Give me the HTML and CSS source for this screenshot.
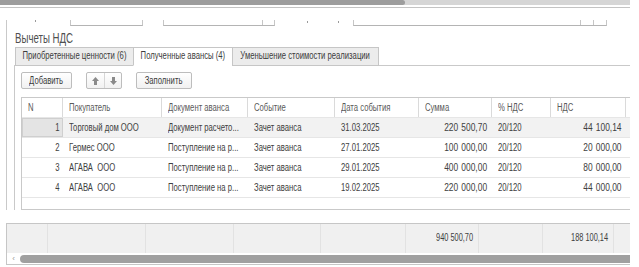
FILE: index.html
```html
<!DOCTYPE html>
<html lang="ru">
<head>
<meta charset="utf-8">
<link rel="stylesheet" href="styles.css">
</head>
<body>
<div class="frame">
  <div class="topscroll"><div class="thumb"></div></div>
  <div class="topline"></div>
  <div class="group">
    <div class="fields">
      <span class="dot d1"></span>
      <span class="field f1"></span>
      <span class="field f2"><span class="btn b12"></span></span>
      <span class="dot d2"></span>
      <span class="dot d3"></span>
      <span class="field f3"><span class="btn b13"></span><span class="btn b14"></span></span>
    </div>
    <div class="title"><span class="t">Вычеты НДС</span></div>
    <div class="tabs">
      <div class="tab t1"><span class="t">Приобретенные ценности (6)</span></div>
      <div class="tab t2 active"><span class="t">Полученные авансы (4)</span></div>
      <div class="tab t3"><span class="t">Уменьшение стоимости реализации</span></div>
    </div>
    <div class="page">
      <div class="toolbar">
        <div class="button add"><span class="t">Добавить</span></div>
        <div class="button arrows">
          <span class="arr"><svg width="7" height="8" viewBox="0 0 7 8"><path d="M3.5 0L7 4H5V8H2V4H0Z" fill="#8a8a8a"/></svg></span>
          <span class="arr sep"><svg width="7" height="8" viewBox="0 0 7 8"><path d="M3.5 8L7 4H5V0H2V4H0Z" fill="#8a8a8a"/></svg></span>
        </div>
        <div class="button fill"><span class="t">Заполнить</span></div>
      </div>
      <div class="grid">
        <div class="row head">
          <div class="c cn"><span class="t">N</span></div>
          <div class="c cb"><span class="t">Покупатель</span></div>
          <div class="c cd"><span class="t">Документ аванса</span></div>
          <div class="c ce"><span class="t">Событие</span></div>
          <div class="c cdt"><span class="t">Дата события</span></div>
          <div class="c cs"><span class="t">Сумма</span></div>
          <div class="c cp"><span class="t">% НДС</span></div>
          <div class="c cv"><span class="t">НДС</span></div>
          <div class="c cx"></div>
        </div>
        <div class="row sel">
          <div class="c cn num"><span class="ncell"><span class="t">1</span></span></div>
          <div class="c cb"><span class="t">Торговый дом ООО</span></div>
          <div class="c cd"><span class="t">Документ расчето...</span></div>
          <div class="c ce"><span class="t">Зачет аванса</span></div>
          <div class="c cdt"><span class="t">31.03.2025</span></div>
          <div class="c cs r"><span class="t">220 500,70</span></div>
          <div class="c cp"><span class="t">20/120</span></div>
          <div class="c cv r"><span class="t">44 100,14</span></div>
          <div class="c cx"></div>
        </div>
        <div class="row">
          <div class="c cn num"><span class="t">2</span></div>
          <div class="c cb"><span class="t">Гермес ООО</span></div>
          <div class="c cd"><span class="t">Поступление на р...</span></div>
          <div class="c ce"><span class="t">Зачет аванса</span></div>
          <div class="c cdt"><span class="t">27.01.2025</span></div>
          <div class="c cs r"><span class="t">100 000,00</span></div>
          <div class="c cp"><span class="t">20/120</span></div>
          <div class="c cv r"><span class="t">20 000,00</span></div>
          <div class="c cx"></div>
        </div>
        <div class="row">
          <div class="c cn num"><span class="t">3</span></div>
          <div class="c cb"><span class="t">АГАВА&nbsp; ООО</span></div>
          <div class="c cd"><span class="t">Поступление на р...</span></div>
          <div class="c ce"><span class="t">Зачет аванса</span></div>
          <div class="c cdt"><span class="t">29.01.2025</span></div>
          <div class="c cs r"><span class="t">400 000,00</span></div>
          <div class="c cp"><span class="t">20/120</span></div>
          <div class="c cv r"><span class="t">80 000,00</span></div>
          <div class="c cx"></div>
        </div>
        <div class="row">
          <div class="c cn num"><span class="t">4</span></div>
          <div class="c cb"><span class="t">АГАВА&nbsp; ООО</span></div>
          <div class="c cd"><span class="t">Поступление на р...</span></div>
          <div class="c ce"><span class="t">Зачет аванса</span></div>
          <div class="c cdt"><span class="t">19.02.2025</span></div>
          <div class="c cs r"><span class="t">220 000,00</span></div>
          <div class="c cp"><span class="t">20/120</span></div>
          <div class="c cv r"><span class="t">44 000,00</span></div>
          <div class="c cx"></div>
        </div>
      </div>
    </div>
  </div>
  <div class="footer">
    <div class="totals">
      <div class="fc w1"></div>
      <div class="fc w2"></div>
      <div class="fc w3"></div>
      <div class="fc w4"></div>
      <div class="fc w5"></div>
      <div class="fc w6"><span class="t">940 500,70</span></div>
      <div class="fc w7"></div>
      <div class="fc w8"><span class="t">188 100,14</span></div>
      <div class="fc w9"></div>
    </div>
    <div class="bscroll">
      <span class="larr">‹</span>
      <div class="bthumb"></div>
    </div>
  </div>
</div>
</body>
</html>
```
FILE: styles.css
```css
* { box-sizing: border-box; }
body {
  margin: 0;
  background: #fff;
  font-family: "Liberation Sans", Arial, sans-serif;
  font-size: 10px;
  color: #404040;
}
.t {
  display: inline-block;
  white-space: nowrap;
  transform: scaleX(0.77);
  transform-origin: left center;
}
.frame { width: 630px; }
.topscroll { height: 5px; background: #d6d6d6; display: flex; }
.topscroll .thumb { width: 405px; background: #9d9d9d; border-radius: 0 3px 3px 0; }
.topline { margin-top: 2px; height: 1px; background: #c4c4c4; }

.group {
  margin-left: 6px;
  padding-left: 1px;
  background: linear-gradient(#c9c9c9, #c9c9c9) no-repeat 0 12px / 1px 100%;
}
.fields { display: flex; height: 18px; align-items: flex-start; }
.dot { width: 1px; height: 2px; background: #9a9a9a; margin-top: 12px; }
.d1 { margin-left: 28px; }
.d2 { margin-left: 32px; margin-top: 13px; }
.d3 { margin-left: 30px; margin-top: 13px; }
.field {
  display: flex; justify-content: flex-end;
  margin-top: 12px; height: 6px;
  border: 1px solid #c6c6c6; border-top: 0; border-bottom-color: #b4b4b4;
}
.f1 { margin-left: 34px; width: 73px; }
.f2 { margin-left: 20px; width: 112px; }
.f3 { margin-left: 14px; width: 254px; }
.btn { border-left: 1px solid #c6c6c6; }
.b12 { width: 12px; }
.b13 { width: 13px; }
.b14 { width: 13px; }

.title {
  margin: 5px 0 0 8px;
  height: 14px; line-height: 14px;
  font-size: 14px; color: #505050;
  white-space: nowrap;
}
.title .t { transform: scaleX(0.69); }
.tabs { display: flex; margin: 2px 0 -1px 8px; }
.tab {
  display: flex; justify-content: center; align-items: flex-start;
  height: 19px; line-height: 16px;
  border: 1px solid #c6c6c6;
  background: #ececec;
  color: #3c3c3c;
  white-space: nowrap;
  overflow: hidden;
  flex: none;
}
.tab .t, .button .t { transform-origin: center; }
.tab + .tab { margin-left: -1px; }
.t1 { width: 119px; }
.t2 { width: 100px; }
.t3 { width: 147px; }
.tab.active { background: #fff; border-bottom-color: #fff; }

.page {
  margin-left: 7px;
  border-left: 1px solid #c9c9c9;
  border-top: 1px solid #c9c9c9;
}
.toolbar { display: flex; margin: 6px 0 0 6px; height: 17px; }
.button {
  display: flex; justify-content: center; align-items: flex-start;
  height: 17px; line-height: 15px;
  border: 1px solid #bdbdbd; border-radius: 2px;
  background: linear-gradient(#ffffff, #f1f1f1);
  color: #3c3c3c;
  white-space: nowrap;
  overflow: hidden;
  flex: none;
}
.add { width: 51px; }
.arrows { margin-left: 14px; width: 36px; }
.arr { width: 17px; display: flex; align-items: center; justify-content: center; height: 15px; }
.arr.sep { border-left: 1px solid #d6d6d6; }
.fill { margin-left: 14px; width: 56px; }

.grid {
  margin: 8px 0 0 6px;
  height: 113px;
  border: 1px solid #c9c9c9; border-right: 0;
}
.row { display: flex; height: 20px; border-bottom: 1px solid #e6e6e6; line-height: 19px; }
.row.head { color: #5a5a5a; }
.row.head .c { border-right: 1px solid #dadada; }
.row.sel { background: #f2f2f2; }
.c { padding: 0 6px; white-space: nowrap; overflow: hidden; flex: none; }
.cn { width: 41px; }
.cb { width: 99px; }
.cd { width: 86px; }
.ce { width: 87px; }
.cdt { width: 84px; }
.cs { width: 73px; }
.cp { width: 59px; }
.cv { width: 75px; }
.cx { width: 6px; padding: 0; }
.row.head .cx { border-right: 0; }
.r { text-align: right; padding-right: 5px; }
.r .t { transform: scaleX(0.84); transform-origin: right center; word-spacing: 1px; }
.num { text-align: right; padding-right: 3px; }
.num .t { transform-origin: right center; }
.row.sel .num { padding: 0; }
.ncell {
  display: block; height: 19px;
  background: #e4e4e4; border: 1px solid #cfcfcf;
  padding-right: 2px; line-height: 17px;
}

.footer {
  margin: 13px 0 0 6px;
  border: 1px solid #c6c6c6; border-right: 0;
}
.totals { display: flex; height: 29px; background: #f0f0f0; line-height: 28px; }
.fc { border-right: 1px solid #e2e2e2; text-align: right; padding-right: 5px; flex: none; white-space: nowrap; }
.fc .t { transform: scaleX(0.74); transform-origin: right center; }
.w1 { width: 41px; }
.w2 { width: 98px; }
.w3 { width: 88px; }
.w4 { width: 87px; }
.w5 { width: 85px; }
.w6 { width: 73px; }
.w7 { width: 64px; }
.w8 { width: 71px; }
.w9 { width: 16px; border-right: 0; }
.bscroll { display: flex; align-items: center; height: 11px; }
.larr { width: 13px; font-size: 8px; color: #999; text-align: center; line-height: 8px; }
.bthumb { flex: 1; height: 8px; background: #a0a0a0; border-radius: 4px 0 0 4px; }
```
